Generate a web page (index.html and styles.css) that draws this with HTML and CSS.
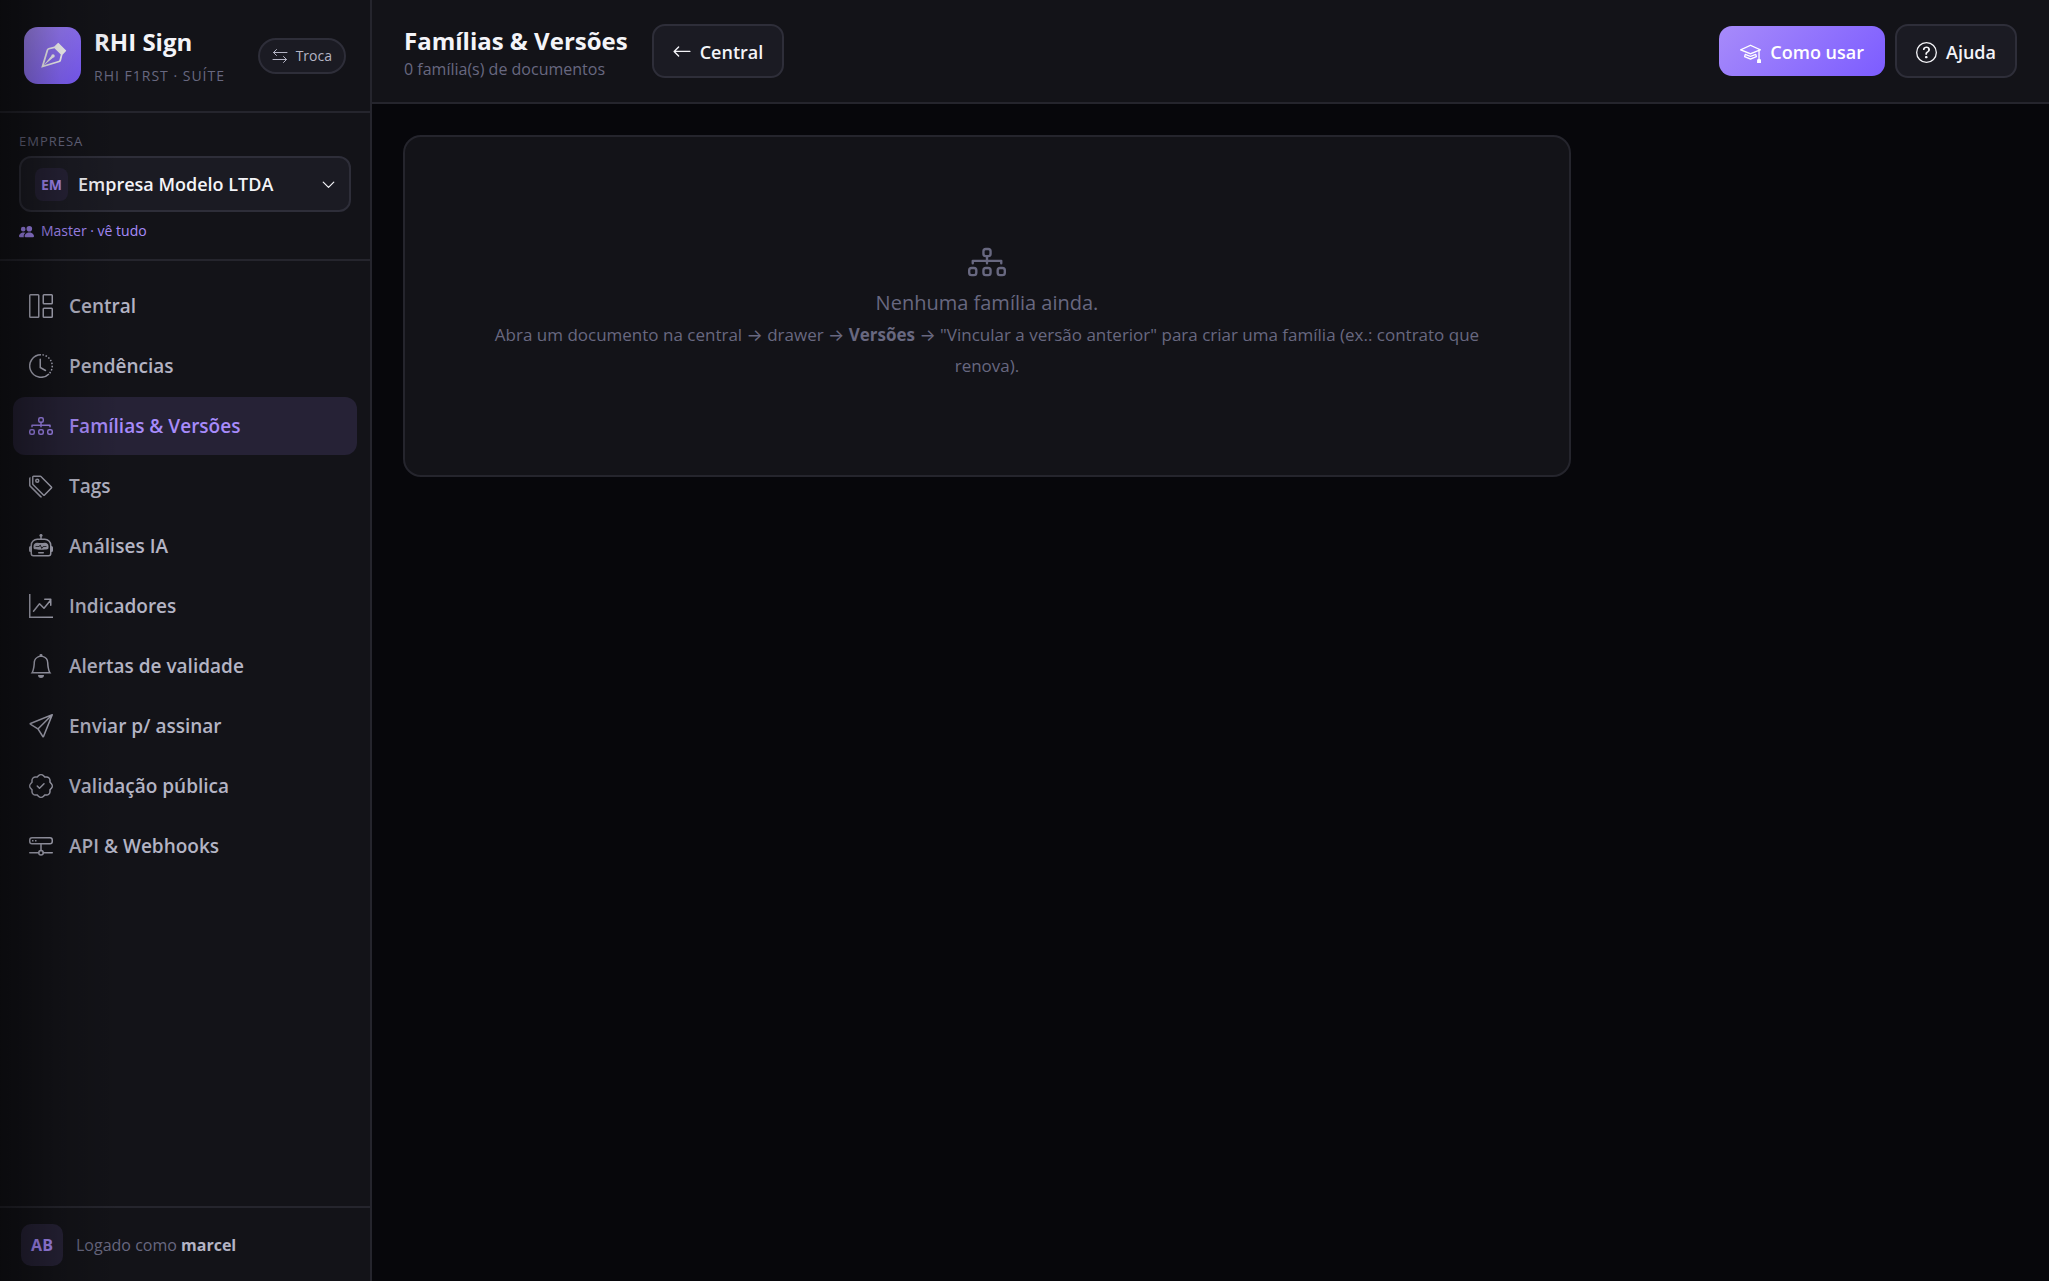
FILE: index.html
```html
<!DOCTYPE html>
<html lang="pt-BR">
<head>
    <meta charset="UTF-8">
    <meta name="viewport" content="width=device-width, initial-scale=1.0">
    <title>Famílias & Versões - RHI Sign</title>
    <link rel="stylesheet" href="styles.css">
</head>
<body>
    <!-- icones usados mais de uma vez -->
    <svg class="sprite" aria-hidden="true">
        <symbol id="i-diagram" viewBox="0 0 16 16">
            <g fill="none" stroke="currentColor">
                <rect x="6.5" y="2.5" width="3" height="3" rx="1"/>
                <rect x=".5" y="10.5" width="3" height="3" rx="1"/>
                <rect x="6.5" y="10.5" width="3" height="3" rx="1"/>
                <rect x="12.5" y="10.5" width="3" height="3" rx="1"/>
                <path d="M8 5.500v3M2 8.500v-1h12v1" stroke-linecap="round" stroke-linejoin="round"/>
            </g>
        </symbol>
    </svg>

    <div class="app">
        <aside class="sidebar">
            <div class="brand">
                <div class="brand-logo">
                    <svg viewBox="0 0 16 16" fill="currentColor"><path fill-rule="evenodd" d="M10.646.646a.5.5 0 0 1 .708 0l4 4a.5.5 0 0 1 0 .708l-1.902 1.902-.829 3.313a1.500 1.500 0 0 1-1.024 1.073L1.254 14.746 4.358 4.400A1.500 1.500 0 0 1 5.430 3.377l3.313-.828zm-1.800 2.908-3.173.793a.5.5 0 0 0-.358.342l-2.570 8.565 8.567-2.570a.5.5 0 0 0 .341-.357l.794-3.174z"/><path fill-rule="evenodd" d="M2.832 13.228 8 9a1 1 0 1 0-1-1l-4.228 5.168-.026.086z"/></svg>
                </div>
                <div class="brand-text">
                    <strong>RHI Sign</strong>
                    <span>RHI F1RST · SUÍTE</span>
                </div>
                <button class="btn-troca" type="button">
                    <svg viewBox="0 0 16 16" fill="none" stroke="currentColor" stroke-linecap="round" stroke-linejoin="round"><path d="M15 4.500H1.500M4.500 1.500l-3 3 3 3M1 11.500h13.500M11.500 8.500l3 3-3 3"/></svg>
                    Troca
                </button>
            </div>

            <div class="empresa">
                <span class="empresa-label" id="empresa-label">EMPRESA</span>
                <button class="empresa-select" type="button" aria-labelledby="empresa-label" aria-haspopup="listbox">
                    <span class="empresa-sigla">EM</span>
                    <span class="empresa-nome">Empresa Modelo LTDA</span>
                    <svg viewBox="0 0 16 16" fill="none" stroke="currentColor" stroke-width="1.500" stroke-linecap="round" stroke-linejoin="round"><path d="M1.500 5L8 11.500 14.500 5"/></svg>
                </button>
                <div class="empresa-papel">
                    <svg viewBox="0 0 16 16" fill="currentColor"><path d="M7 14s-1 0-1-1 1-4 5-4 5 3 5 4-1 1-1 1zm4-6a3 3 0 1 0 0-6 3 3 0 0 0 0 6m-5.784 6A2.240 2.240 0 0 1 5 13c0-1.355.68-2.750 1.936-3.720A6.300 6.300 0 0 0 5 9c-4 0-5 3-5 4s1 1 1 1zM4.500 8a2.500 2.500 0 1 0 0-5 2.500 2.500 0 0 0 0 5"/></svg>
                    Master · vê tudo
                </div>
            </div>

            <nav class="menu">
                <a href="#">
                    <svg viewBox="0 0 16 16" fill="none" stroke="currentColor"><rect x=".5" y=".5" width="6" height="15" rx=".5"/><rect x="9.500" y=".5" width="6" height="6" rx=".5"/><rect x="9.500" y="9.500" width="6" height="6" rx=".5"/></svg>
                    Central
                </a>
                <a href="#">
                    <svg viewBox="0 0 16 16" fill="none" stroke="currentColor"><path d="M8 .5a7.500 7.500 0 1 0 5.300 12.800"/><path d="M8 .5a7.500 7.500 0 0 1 5.300 12.800" stroke-dasharray="1 1.100" stroke-dashoffset="-1"/><path d="M7.500 3.500V9l3.500 2" stroke-linecap="round"/></svg>
                    Pendências
                </a>
                <a class="active" href="#">
                    <svg><use href="#i-diagram"/></svg>
                    Famílias &amp; Versões
                </a>
                <a href="#">
                    <svg viewBox="0 0 16 16" fill="currentColor"><path d="M3 2v4.586l7 7L14.586 9l-7-7zM2 2a1 1 0 0 1 1-1h4.586a1 1 0 0 1 .707.293l7 7a1 1 0 0 1 0 1.414l-4.586 4.586a1 1 0 0 1-1.414 0l-7-7A1 1 0 0 1 2 6.586z"/><path d="M5.500 5a.5.5 0 1 1 0-1 .5.5 0 0 1 0 1m0 1a1.500 1.500 0 1 0 0-3 1.500 1.500 0 0 0 0 3M1 7.086a1 1 0 0 0 .293.707L8.750 15.250l-.043.043a1 1 0 0 1-1.414 0l-7-7A1 1 0 0 1 0 7.586V3a1 1 0 0 1 1-1z"/></svg>
                    Tags
                </a>
                <a href="#">
                    <svg viewBox="0 0 16 16" fill="currentColor"><path d="M6 12.500a.5.5 0 0 1 .5-.5h3a.5.5 0 0 1 0 1h-3a.5.5 0 0 1-.5-.5M3 8.062C3 6.760 4.235 5.765 5.530 5.886a26.600 26.600 0 0 0 4.940 0C11.765 5.765 13 6.760 13 8.062v1.157a.93.930 0 0 1-.765.935c-.845.147-2.340.346-4.235.346s-3.390-.2-4.235-.346A.93.930 0 0 1 3 9.219zm4.542-.827a.25.250 0 0 0-.217.068l-.92.900a25 25 0 0 1-1.871-.183.25.250 0 0 0-.068.495c.55.076 1.232.149 2.020.193a.25.250 0 0 0 .189-.071l.754-.736.847 1.710a.25.250 0 0 0 .404.062l.932-.97a25 25 0 0 0 1.922-.188.25.250 0 0 0-.068-.495c-.538.074-1.207.145-1.980.189a.25.250 0 0 0-.166.076l-.754.785-.842-1.700a.25.250 0 0 0-.182-.135"/><path d="M8.500 1.866a1 1 0 1 0-1 0V3h-2A4.500 4.500 0 0 0 1 7.500V8a1 1 0 0 0-1 1v2a1 1 0 0 0 1 1v1a2 2 0 0 0 2 2h10a2 2 0 0 0 2-2v-1a1 1 0 0 0 1-1V9a1 1 0 0 0-1-1v-.5A4.500 4.500 0 0 0 10.500 3h-2zM14 7.500V13a1 1 0 0 1-1 1H3a1 1 0 0 1-1-1V7.500A3.500 3.500 0 0 1 5.500 4h5A3.500 3.500 0 0 1 14 7.500"/></svg>
                    Análises IA
                </a>
                <a href="#">
                    <svg viewBox="0 0 16 16" fill="none" stroke="currentColor"><path d="M.5 0v15.500H16"/><path d="M3 11.500l4-5 3 3 4.500-5.500M10.500 3.500h4v4" stroke-linecap="round" stroke-linejoin="round"/></svg>
                    Indicadores
                </a>
                <a href="#">
                    <svg viewBox="0 0 16 16" fill="currentColor"><path d="M8 16a2 2 0 0 0 2-2H6a2 2 0 0 0 2 2M8 1.918l-.797.161A4 4 0 0 0 4 6c0 .628-.134 2.197-.459 3.742-.16.767-.376 1.566-.663 2.258h10.244c-.287-.692-.502-1.490-.663-2.258C12.134 8.197 12 6.628 12 6a4 4 0 0 0-3.203-3.920zM14.220 12c.223.447.481.801.78 1H1c.299-.199.557-.553.78-1C2.680 10.200 3 6.880 3 6c0-2.420 1.720-4.440 4.005-4.901a1 1 0 1 1 1.990 0A5 5 0 0 1 13 6c0 .88.320 4.200 1.220 6"/></svg>
                    Alertas de validade
                </a>
                <a href="#">
                    <svg viewBox="0 0 16 16" fill="currentColor"><path d="M15.854.146a.5.5 0 0 1 .11.540l-5.819 14.547a.75.750 0 0 1-1.329.124l-3.178-4.995L.643 7.184a.75.750 0 0 1 .124-1.330L15.314.037a.5.5 0 0 1 .54.110ZM6.636 10.070l2.761 4.338L14.130 2.576zm6.787-8.201L1.591 6.602l4.339 2.760z"/></svg>
                    Enviar p/ assinar
                </a>
                <a href="#">
                    <svg viewBox="0 0 16 16" fill="currentColor"><path d="M10.354 6.146a.5.5 0 0 1 0 .708l-3 3a.5.5 0 0 1-.708 0l-1.500-1.500a.5.5 0 1 1 .708-.708L7 8.793l2.646-2.647a.5.5 0 0 1 .708 0"/><path d="m10.273 2.513-.921-.944.715-.698.622.637.890-.011a2.890 2.890 0 0 1 2.924 2.924l-.010.890.636.622a2.890 2.890 0 0 1 0 4.134l-.637.622.011.890a2.890 2.890 0 0 1-2.924 2.924l-.890-.010-.622.636a2.890 2.890 0 0 1-4.134 0l-.622-.637-.890.011a2.890 2.890 0 0 1-2.924-2.924l.010-.890-.636-.622a2.890 2.890 0 0 1 0-4.134l.637-.622-.011-.890a2.890 2.890 0 0 1 2.924-2.924l.890.010.622-.636a2.890 2.890 0 0 1 4.134 0l-.715.698a1.890 1.890 0 0 0-2.704 0l-.920.944-1.320-.016a1.890 1.890 0 0 0-1.911 1.912l.016 1.318-.944.921a1.890 1.890 0 0 0 0 2.704l.944.920-.016 1.320a1.890 1.890 0 0 0 1.912 1.911l1.318-.016.921.944a1.890 1.890 0 0 0 2.704 0l.920-.944 1.320.016a1.890 1.890 0 0 0 1.911-1.912l-.016-1.318.944-.921a1.890 1.890 0 0 0 0-2.704l-.944-.920.016-1.320a1.890 1.890 0 0 0-1.912-1.911z"/></svg>
                    Validação pública
                </a>
                <a href="#">
                    <svg viewBox="0 0 16 16" fill="none" stroke="currentColor"><rect x=".5" y="2.500" width="15" height="4" rx="1.500"/><path d="M8 6.500V11M.5 12.500h6M9.500 12.500h6" stroke-linecap="round"/><circle cx="8" cy="12.500" r="1.500"/><path d="M2 4.500h1M4 4.500h1"/></svg>
                    API &amp; Webhooks
                </a>
            </nav>

            <div class="usuario">
                <span class="avatar">AB</span>
                <span>Logado como <b>marcel</b></span>
            </div>
        </aside>

        <div class="main">
            <header class="topbar">
                <div class="titulo">
                    <h1>Famílias &amp; Versões</h1>
                    <p>0 família(s) de documentos</p>
                </div>
                <button class="btn" type="button">
                    <svg class="seta" viewBox="0 0 16 16" fill="none" stroke="currentColor" stroke-width="1.200" stroke-linecap="round" stroke-linejoin="round"><path d="M15 7.500H1M5 3.500l-4 4 4 4"/></svg>
                    Central
                </button>
                <div class="acoes">
                    <button class="btn btn-primary" type="button">
                        <svg viewBox="0 0 16 16" fill="currentColor"><path d="M8.211 2.047a.5.5 0 0 0-.422 0l-7.500 3.500a.5.5 0 0 0 .025.917l7.500 3a.5.5 0 0 0 .372 0L14 7.140V13a1 1 0 0 0-1 1v2h3v-2a1 1 0 0 0-1-1V6.739l.686-.275a.5.5 0 0 0 .025-.917zM8 8.460 1.758 5.965 8 3.052l6.242 2.913z"/><path d="M4.176 9.032a.5.5 0 0 0-.656.327l-.5 1.700a.5.5 0 0 0 .294.605l4.500 1.800a.5.5 0 0 0 .372 0l4.500-1.800a.5.5 0 0 0 .294-.605l-.5-1.700a.5.5 0 0 0-.656-.327L8 10.466zm-.068 1.873.220-.748 3.496 1.311a.5.5 0 0 0 .352 0l3.496-1.311.220.748L8 12.460z"/></svg>
                        Como usar
                    </button>
                    <button class="btn" type="button">
                        <svg viewBox="0 0 16 16" fill="currentColor"><path d="M8 15A7 7 0 1 1 8 1a7 7 0 0 1 0 14m0 1A8 8 0 1 0 8 0a8 8 0 0 0 0 16"/><path d="M5.255 5.786a.237.237 0 0 0 .241.247h.825c.138 0 .248-.113.266-.250.090-.656.540-1.134 1.342-1.134.686 0 1.314.343 1.314 1.168 0 .635-.374.927-.965 1.371-.673.489-1.206 1.060-1.168 1.987l.003.217a.25.250 0 0 0 .25.246h.811a.25.250 0 0 0 .25-.250v-.105c0-.718.273-.927 1.010-1.486.609-.463 1.244-.977 1.244-2.056 0-1.511-1.276-2.241-2.673-2.241-1.267 0-2.655.590-2.750 2.286m1.557 5.763c0 .533.425.927 1.010.927.609 0 1.028-.394 1.028-.927 0-.552-.420-.940-1.029-.940-.584 0-1.009.388-1.009.940"/></svg>
                        Ajuda
                    </button>
                </div>
            </header>

            <main class="content">
                <section class="card vazio">
                    <svg><use href="#i-diagram"/></svg>
                    <h2>Nenhuma família ainda.</h2>
                    <p>Abra um documento na central → drawer → <b>Versões</b> → "Vincular a versão anterior" para criar uma família (ex.: contrato que renova).</p>
                </section>
            </main>
        </div>
    </div>
</body>
</html>
```
FILE: styles.css
```css
:root {
    --bg: #07070b;
    --panel: #131318;
    --panel-2: #1b1b23;
    --line: #25252d;
    --line-2: #2e2e39;
    --text: #f4f4f8;
    --text-2: #b4b4c4;
    --muted: #686880;
    --roxo: #a78bfa;
    --roxo-2: #7c5cff;
    --roxo-bg: #262236;
}

* {
    box-sizing: border-box;
}

body {
    margin: 0;
    background: var(--bg);
    color: var(--text);
    font-family: "Segoe UI", "Open Sans", Inter, sans-serif;
    font-size: 18px;
}

button {
    font-family: inherit;
    cursor: pointer;
}

svg {
    flex-shrink: 0;
    width: 21px;
    height: 21px;
}

.sprite {
    position: absolute;
    width: 0;
    height: 0;
}

.app {
    display: flex;
    min-height: 100vh;
}

/* sidebar */
.sidebar {
    position: relative;
    display: flex;
    flex-direction: column;
    flex-shrink: 0;
    width: 372px;
    background: var(--panel);
    border-right: 2px solid var(--line);
}

/* sombra na borda esquerda */
.sidebar::after {
    content: "";
    position: absolute;
    inset: 0 auto 0 0;
    width: 120px;
    background: linear-gradient(90deg, rgba(0, 0, 0, .45), rgba(0, 0, 0, .15) 50%, transparent);
    pointer-events: none;
}

.brand {
    display: flex;
    align-items: center;
    gap: 13px;
    height: 113px;
    padding: 0 24px;
    border-bottom: 2px solid var(--line);
}

.brand-logo {
    display: flex;
    align-items: center;
    justify-content: center;
    width: 57px;
    height: 57px;
    border-radius: 14px;
    background: linear-gradient(135deg, var(--roxo), var(--roxo-2));
    color: #fff;
}

.brand-logo svg {
    width: 28px;
    height: 28px;
}

.brand-text {
    flex: 1;
    display: flex;
    flex-direction: column;
    gap: 8px;
    white-space: nowrap;
}

.brand-text strong {
    font-size: 24px;
    line-height: 32px;
}

.brand-text span {
    color: var(--muted);
    font-size: 14px;
    line-height: 20px;
    letter-spacing: 1px;
}

.btn-troca {
    display: flex;
    align-items: center;
    gap: 8px;
    height: 36px;
    padding: 0 12px;
    border: 2px solid var(--line-2);
    border-radius: 18px;
    background: var(--panel-2);
    color: var(--text-2);
    font-size: 14px;
}

.btn-troca svg {
    width: 16px;
    height: 16px;
}

.empresa {
    padding: 19px 19px 17px;
    border-bottom: 2px solid var(--line);
}

.empresa-label {
    display: block;
    color: var(--muted);
    font-size: 13px;
    line-height: 18px;
    letter-spacing: 1px;
}

.empresa-select {
    display: flex;
    align-items: center;
    gap: 10px;
    width: 100%;
    height: 56px;
    margin: 6px 0 8px;
    padding: 0 14px;
    border: 2px solid var(--line-2);
    border-radius: 12px;
    background: var(--panel-2);
    color: var(--text);
    font-size: 18px;
    font-weight: 600;
    text-align: left;
}

.empresa-select svg {
    width: 13px;
    height: 13px;
}

.empresa-sigla {
    width: 33px;
    border-radius: 8px;
    background: var(--roxo-bg);
    color: var(--roxo);
    font-size: 14px;
    font-weight: 700;
    line-height: 33px;
    text-align: center;
}

.empresa-nome {
    flex: 1;
}

.empresa-papel {
    display: flex;
    align-items: center;
    gap: 7px;
    color: var(--roxo);
    font-size: 14px;
    line-height: 22px;
}

.empresa-papel svg {
    width: 15px;
    height: 15px;
}

.menu {
    flex: 1;
    display: flex;
    flex-direction: column;
    gap: 2px;
    padding: 16px 13px;
}

.menu a {
    display: flex;
    align-items: center;
    gap: 16px;
    height: 58px;
    padding: 0 16px;
    border-radius: 12px;
    color: var(--text-2);
    font-size: 19px;
    font-weight: 600;
    text-decoration: none;
}

.menu svg {
    width: 24px;
    height: 24px;
}

.menu a.active {
    background: var(--roxo-bg);
    color: var(--roxo);
}

.usuario {
    display: flex;
    align-items: center;
    gap: 13px;
    height: 75px;
    padding: 0 21px;
    border-top: 2px solid var(--line);
    color: var(--muted);
    font-size: 16px;
}

.usuario b {
    color: var(--text-2);
}

.avatar {
    width: 42px;
    border-radius: 10px;
    background: var(--roxo-bg);
    color: var(--roxo);
    font-size: 16px;
    font-weight: 700;
    line-height: 42px;
    text-align: center;
}

/* conteudo */
.main {
    flex: 1;
    min-width: 0;
}

.topbar {
    display: flex;
    align-items: center;
    gap: 24px;
    height: 104px;
    padding: 0 32px;
    border-bottom: 2px solid var(--line);
    background: var(--panel);
}

.titulo {
    padding-top: 4px;
}

.titulo h1 {
    margin: 0;
    font-size: 24px;
    line-height: 32px;
}

.titulo p {
    margin: 0;
    color: var(--muted);
    font-size: 16px;
    line-height: 24px;
}

.acoes {
    display: flex;
    align-items: center;
    gap: 10px;
    margin-left: auto;
}

.btn {
    display: flex;
    align-items: center;
    gap: 9px;
    height: 54px;
    padding: 2px 19px 0;
    border: 2px solid var(--line-2);
    border-radius: 13px;
    background: var(--panel-2);
    color: var(--text);
    font-size: 18px;
    font-weight: 600;
}

.btn .seta {
    width: 18px;
    height: 18px;
}

.btn-primary {
    height: 50px;
    padding: 2px 21px 0;
    border: none;
    background: linear-gradient(135deg, var(--roxo), var(--roxo-2));
    color: #fff;
}

.content {
    padding: 31px;
}

.card {
    max-width: 1168px;
    border: 2px solid var(--line);
    border-radius: 18px;
    background: var(--panel);
}

.vazio {
    padding: 106px 64px 94px;
    color: var(--muted);
    text-align: center;
}

.vazio svg {
    display: block;
    width: 38px;
    height: 38px;
    margin: 0 auto 6px;
}

.vazio h2 {
    margin: 0;
    font-size: 20px;
    font-weight: 400;
    line-height: 32px;
}

.vazio p {
    margin: 0;
    font-size: 17px;
    line-height: 31px;
}
```
